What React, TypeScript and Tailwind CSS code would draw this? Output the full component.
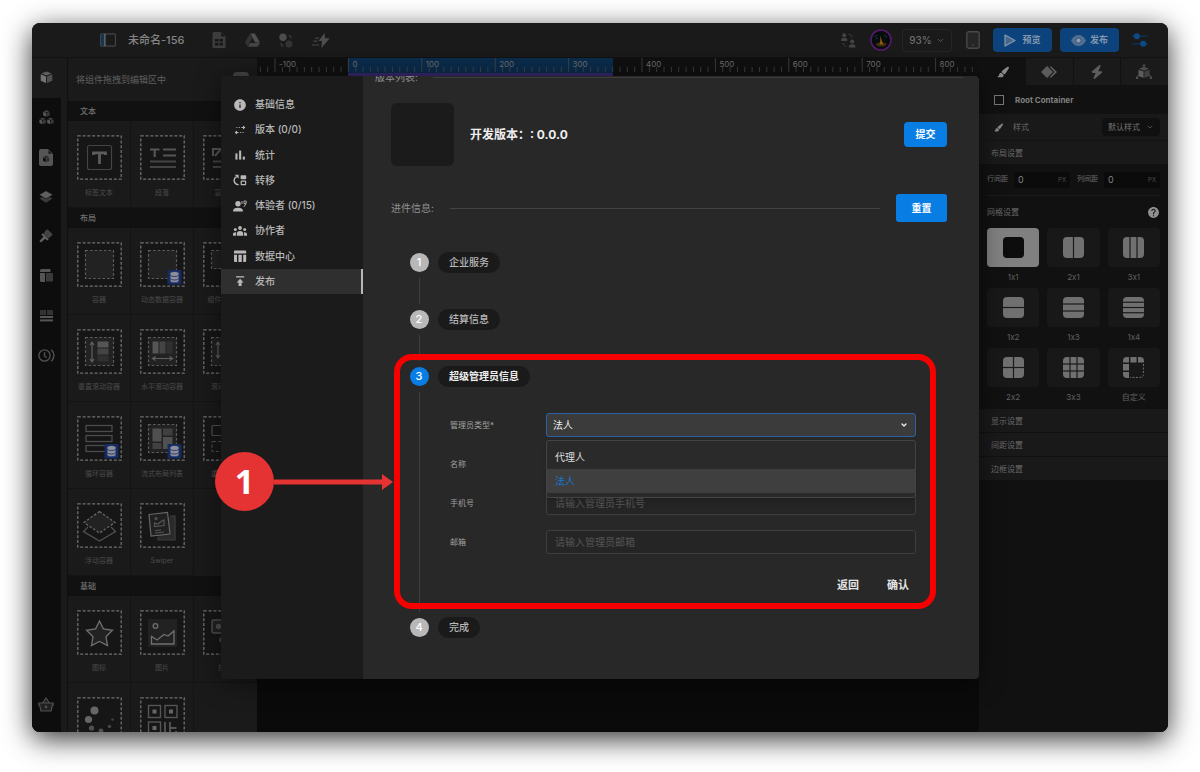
import type { ReactNode } from 'react';
import { useState } from 'react';
import { ChevronDown } from 'lucide-react';
import { MdHelp, MdInfo } from 'react-icons/md';
import { FaBolt, FaPaintbrush } from 'react-icons/fa6';

interface MenuItem {
  label: string;
  icon: ReactNode;
}

interface LibraryItem {
  label: string;
  icon: ReactNode;
  data?: boolean;
}

interface LibraryGroup {
  title: string;
  items: LibraryItem[];
}

const CubeShape = ({ x = 0, y = 0, s = 1 }: { x?: number; y?: number; s?: number }) => (
  <g transform={`translate(${x} ${y}) scale(${s})`}>
    <path d="M7 0.5 12.6 2.6 7 4.8 1.4 2.6Z" opacity="0.75" />
    <path d="M0.8 3.6 6.5 5.8V13L0.8 10.6Z" />
    <path d="M13.2 3.6 7.5 5.8V13L13.2 10.6Z" opacity="0.6" />
  </g>
);

const railIcons: ReactNode[] = [
  <svg key="cube" viewBox="0 0 14 14" className="size-[13px]" fill="#747474"><CubeShape /></svg>,
  <svg key="cubes" viewBox="0 0 15 15" className="size-[15px]" fill="#585858">
    <CubeShape x={3.8} y={0} s={0.52} />
    <CubeShape x={0} y={7.6} s={0.52} />
    <CubeShape x={7.8} y={7.6} s={0.52} />
  </svg>,
  <svg key="file" viewBox="0 0 14 17" className="h-[17px] w-3.5">
    <path d="M2 0H9L14 5V15a2 2 0 0 1-2 2H2a2 2 0 0 1-2-2V2a2 2 0 0 1 2-2Z" fill="#555" />
    <g fill="#111"><CubeShape x={3.6} y={6.6} s={0.5} /><path d="M9.5 1.5V4.7H12.7Z" /></g>
  </svg>,
  <svg key="layers" viewBox="0 0 14 14" className="size-3.5">
    <path d="M0.4 8.6 7 5.2 13.6 8.6 7 12.8Z" fill="#3a3a3a" />
    <path d="M7 0.8 14 4.8 7 8.8 0 4.8Z" fill="#606060" stroke="#0d0d0d" strokeWidth="0.6" />
  </svg>,
  <svg key="gavel" viewBox="0 0 14 14" className="size-3.5">
    <path d="M6.4 1.8 8.4 0.2 13.8 5.4 9.4 9.6 4.6 4.8Z" fill="#444" />
    <path d="M3.8 4.2 9.8 10.2 8.2 11.6 6.2 9.8 2 13.6 0.4 12 4.4 7.8 2.4 5.8Z" fill="#606060" />
  </svg>,
  <svg key="panels" viewBox="0 0 13 13" className="size-[13px]" fill="#555">
    <path d="M1.5 0H10.5V3H0V1.5A1.5 1.5 0 0 1 1.5 0ZM0 4H5V13H1.5A1.5 1.5 0 0 1 0 11.5Z" />
    <rect x="6" y="4" width="7" height="8.5" rx="1" fill="#3a3a3a" />
  </svg>,
  <svg key="rows" viewBox="0 0 13 12" className="h-3 w-[13px]" fill="#555">
    <rect width="6" height="5" fill="#333" /><rect x="7" width="6" height="5" fill="#333" />
    <rect y="6" width="13" height="2" /><rect y="9.4" width="13" height="2" />
  </svg>,
  <svg key="clock" viewBox="0 0 17 13" className="h-[13px] w-[17px]" fill="none" stroke="#505050" strokeWidth="1.4">
    <circle cx="6.5" cy="6.5" r="5.6" /><path d="M6.5 3.2V7L8.6 8.8" /><path d="M13.4 0.8Q18.5 6.5 13.4 12.2" />
  </svg>,
];

const dbBadge = (
  <g>
    <rect x="27.5" y="28" width="14" height="14.5" rx="1" fill="#172b63" />
    <g fill="#8c8f9a" stroke="#172b63" strokeWidth="0.8">
      <path d="M30 38.2V36.4H39V38.2Q39 40.8 34.5 40.8T30 38.2Z" />
      <path d="M30 35.4V33.2H39V35.4Q39 38 34.5 38T30 35.4Z" />
      <ellipse cx="34.5" cy="32" rx="4.7" ry="2.5" />
    </g>
  </g>
);

const innerDashes = <rect x="8.5" y="8.5" width="28" height="28" fill="#222" stroke="#5c5c5c" strokeWidth="1.2" strokeDasharray="2.6 2" />;

const library: LibraryGroup[] = [
  {
    title: '文本',
    items: [
      {
        label: '标签文本',
        icon: (
          <g>
            <rect x="10.5" y="10.5" width="24" height="24" rx="2" fill="none" stroke="#444" strokeWidth="1.2" />
            <path d="M16.5 20V17.8H28.5V20M22.5 17.5V29" fill="none" stroke="#5c5c5c" strokeWidth="2.8" />
          </g>
        ),
      },
      {
        label: '段落',
        icon: (
          <g fill="none" stroke="#555" strokeWidth="2.2">
            <path d="M10 14.5H19.5M14.7 14.5V22M23 14.5H36M23 20.5H36" /><path d="M10 26.5H36M10 32H36" stroke="#444" />
          </g>
        ),
      },
      {
        label: '富文本',
        icon: <g fill="none" stroke="#555" strokeWidth="2"><path d="M10 21V14H18L12 21M23 14H36M23 20H36" /><path d="M10 26.5H36M10 32H36" stroke="#444" /></g>,
      },
    ],
  },
  {
    title: '布局',
    items: [
      { label: '容器', icon: innerDashes },
      { label: '动态数据容器', icon: innerDashes, data: true },
      { label: '组件化容器', icon: <rect x="8.5" y="8.5" width="28" height="18" fill="#222" stroke="#5c5c5c" strokeWidth="1.2" strokeDasharray="2.6 2" /> },
      {
        label: '垂直滚动容器',
        icon: (
          <g>
            {innerDashes}
            <path d="M15 14V32M13 16 15 13 17 16M13 30 15 33 17 30" fill="none" stroke="#606060" strokeWidth="1.2" />
            <rect x="20.5" y="12.5" width="11" height="6" fill="#555" /><rect x="20.5" y="19.5" width="11" height="6" fill="#444" /><rect x="20.5" y="26.5" width="11" height="6" fill="#303030" />
          </g>
        ),
      },
      {
        label: '水平滚动容器',
        icon: (
          <g>
            {innerDashes}
            <path d="M13 29.5H32M15.5 27.5 12.5 29.5 15.5 31.5M29.5 27.5 32.5 29.5 29.5 31.5" fill="none" stroke="#606060" strokeWidth="1.2" />
            <rect x="12.5" y="12.5" width="6" height="12" fill="#555" /><rect x="19.5" y="12.5" width="6" height="12" fill="#444" /><rect x="26.5" y="12.5" width="6" height="12" fill="#303030" />
          </g>
        ),
      },
      {
        label: '滚动容器',
        icon: <g>{innerDashes}<path d="M15 14V28M13 16 15 13 17 16M13 26 15 29 17 26" fill="none" stroke="#606060" strokeWidth="1.2" /></g>,
      },
      {
        label: '循环容器',
        data: true,
        icon: <g fill="none" stroke="#4c4c4c" strokeWidth="1.3"><rect x="9" y="9.5" width="26" height="6" /><rect x="9" y="19.5" width="26" height="6" /><rect x="9" y="29.5" width="26" height="6" /></g>,
      },
      {
        label: '流式布局列表',
        data: true,
        icon: (
          <g>
            {innerDashes}
            <rect x="12.5" y="12.5" width="9" height="13" fill="#505050" /><rect x="23" y="12.5" width="9.5" height="7" fill="#404040" />
            <rect x="12.5" y="27" width="9" height="6" fill="#404040" /><rect x="23" y="21" width="9.5" height="12" fill="#505050" />
          </g>
        ),
      },
      {
        label: '重叠容器',
        icon: <g fill="none" stroke="#505050" strokeWidth="1.2"><rect x="9" y="9.5" width="12" height="10" rx="1" /><rect x="9" y="25.5" width="12" height="10" rx="1" strokeDasharray="3 2" /></g>,
      },
      {
        label: '浮动容器',
        icon: (
          <g strokeWidth="1.3">
            <path d="M11 24 6.5 28.5 22.5 38 38.5 28.5 34 24" fill="none" stroke="#505050" />
            <path d="M22.5 8.5 38 19.5 22.5 30 7 19.5Z" fill="#222" stroke="#666" strokeDasharray="2.6 1.7" />
          </g>
        ),
      },
      {
        label: 'Swiper',
        icon: (
          <g fill="none" stroke="#555" strokeWidth="1.2">
            <path d="M30 13H35V37H18V34" fill="#2a2a2a" stroke="#3d3d3d" />
            <path d="M9 11.5 27.5 9.5 30 31 11 33Z" fill="#202020" stroke="#666" />
            <circle cx="16" cy="15.5" r="1" /><path d="M14.5 23.5V20L18 21 21 18.5 24 17V22.5ZM15 27.5 21 27M15 30 24 29" />
          </g>
        ),
      },
    ],
  },
  {
    title: '基础',
    items: [
      { label: '图标', icon: <path d="M22.5 11 26.4 18.8 35.5 20.3 29 26.7 30.5 35.5 22.5 31.5 14.5 35.5 16 26.7 9.5 20.3 18.6 18.8Z" fill="#222" stroke="#707070" strokeWidth="1.3" /> },
      {
        label: '图片',
        icon: (
          <g fill="none" stroke="#707070" strokeWidth="1.3">
            <rect x="8" y="9" width="29" height="28" fill="#222" stroke="none" /><circle cx="15.5" cy="16" r="2.3" />
            <path d="M11.5 34V26.5L17 30 24 24.5 28 26 34 21V34Z" />
          </g>
        ),
      },
      { label: '按钮', icon: <g fill="none" stroke="#505050" strokeWidth="1.4"><rect x="9" y="10" width="27" height="13" rx="2" fill="#222" /><circle cx="15.5" cy="16.5" r="2" fill="#505050" /><path d="M21 27A3 3 0 0 0 18 32" /></g> },
      {
        label: '加载',
        icon: (
          <g fill="#666">
            <circle cx="17.5" cy="13.5" r="4" /><circle cx="11.5" cy="22.5" r="3.6" /><circle cx="14.5" cy="31" r="2.6" fill="#505050" />
            <circle cx="24" cy="34" r="2.4" fill="#505050" /><circle cx="32.5" cy="29.5" r="1.8" fill="#444" /><circle cx="35.5" cy="22.5" r="1.2" fill="#444" />
          </g>
        ),
      },
      {
        label: '二维码',
        icon: (
          <g fill="none" stroke="#555" strokeWidth="1.4">
            <rect x="8.5" y="8.5" width="12" height="12" /><rect x="25" y="8.5" width="12" height="12" /><rect x="8.5" y="25" width="12" height="12" />
            <g fill="#666" stroke="none"><rect x="12.5" y="12.5" width="4" height="4" /><rect x="29" y="12.5" width="4" height="4" /><rect x="12.5" y="29" width="4" height="4" /></g>
            <path d="M25 25V37M30 25V31H36.5M30 31V36M36 34V38" strokeWidth="1.8" />
          </g>
        ),
      },
    ],
  },
];

const menu: MenuItem[] = [
  { label: '基础信息', icon: <MdInfo size={14} /> },
  {
    label: '版本 (0/0)',
    icon: (
      <svg viewBox="0 0 14 14" className="size-3.5" fill="currentColor">
        <path d="M8.4 4H10V2.6L12.4 4.5 10 6.4V5H8.4ZM5.6 9H4V7.6L1.6 9.5 4 11.4V10H5.6Z" />
        <path d="M3.4 4H4.4V5H3.4ZM5.8 4H6.8V5H5.8ZM7.2 9H8.2V10H7.2ZM9.6 9H10.6V10H9.6Z" />
      </svg>
    ),
  },
  {
    label: '统计',
    icon: (
      <svg viewBox="0 0 14 14" className="size-3.5" fill="currentColor">
        <rect x="2.4" y="5.4" width="2.1" height="6.2" /><rect x="6.1" y="2.6" width="2.1" height="9" /><rect x="9.8" y="8.6" width="2.1" height="3" />
      </svg>
    ),
  },
  {
    label: '转移',
    icon: (
      <svg viewBox="0 0 14 14" className="size-3.5" fill="currentColor">
        <path d="M5.6 11.6H5A4.2 4.2 0 0 1 3.6 3.6" fill="none" stroke="currentColor" strokeWidth="1.4" />
        <path d="M1.6 1.8H5.6V5.8Z" /><rect x="7.6" y="2.2" width="5.6" height="4" rx="0.8" />
        <rect x="8.2" y="8.2" width="4.4" height="3.4" rx="0.4" fill="none" stroke="currentColor" strokeWidth="1.2" />
      </svg>
    ),
  },
  {
    label: '体验者 (0/15)',
    icon: (
      <svg viewBox="0 0 14 14" className="size-3.5" fill="currentColor">
        <circle cx="5" cy="4.8" r="2.7" /><path d="M0.2 12.6V11.6Q0.2 8.8 5 8.8T9.8 11.6V12.6Z" />
        <path d="M9 2V5M11 2H13.2V4.6H11ZM12.8 5 10.8 8" fill="none" stroke="currentColor" strokeWidth="0.9" />
      </svg>
    ),
  },
  {
    label: '协作者',
    icon: (
      <svg viewBox="0 0 14 14" className="size-3.5" fill="currentColor">
        <circle cx="7" cy="4" r="1.9" /><circle cx="2.3" cy="5.6" r="1.5" /><circle cx="11.7" cy="5.6" r="1.5" />
        <path d="M3.8 11.8V9.6Q3.8 7 7 7T10.2 9.6V11.8ZM0 11.8V9.8Q0 8 3 8.2L2.9 11.8ZM14 11.8V9.8Q14 8 11 8.2L11.1 11.8Z" />
      </svg>
    ),
  },
  {
    label: '数据中心',
    icon: (
      <svg viewBox="0 0 14 14" className="size-3.5" fill="currentColor">
        <path d="M2 1.4H12.2A1 1 0 0 1 13.2 2.4V4.6H1V2.4A1 1 0 0 1 2 1.4ZM1 5.8H4V13H2A1 1 0 0 1 1 12ZM5.4 5.8H8.8V13H5.4ZM10.2 5.8H13.2V12A1 1 0 0 1 12.2 13H10.2Z" />
      </svg>
    ),
  },
  {
    label: '发布',
    icon: (
      <svg viewBox="0 0 14 14" className="size-3.5" fill="currentColor">
        <rect x="3" y="2.2" width="8.2" height="1.3" />
        <path d="M7.1 4.8 10.6 8.4H8.6V12H5.6V8.4H3.6Z" />
      </svg>
    ),
  },
];

const grids = [
  { label: '1x1', cols: 1, rows: 1 },
  { label: '2x1', cols: 2, rows: 1 },
  { label: '3x1', cols: 3, rows: 1 },
  { label: '1x2', cols: 1, rows: 2 },
  { label: '1x3', cols: 1, rows: 3 },
  { label: '1x4', cols: 1, rows: 4 },
  { label: '2x2', cols: 2, rows: 2 },
  { label: '3x3', cols: 3, rows: 3 },
  { label: '自定义', cols: 0, rows: 0 },
];

function TopBar() {
  return (
    <header className="flex h-[35px] shrink-0 items-center border-b border-[#111] bg-[#1a1a1a] pr-5 pl-[68px]">
      <button aria-label="侧边栏">
        <svg viewBox="0 0 16 14" className="h-3.5 w-4" fill="none">
          <rect x="0.6" y="0.8" width="14.8" height="12.4" rx="1" stroke="#444" strokeWidth="1.2" />
          <rect x="1.2" y="1.4" width="3" height="11.2" fill="#15375f" /><path d="M4.9 1V13" stroke="#777" strokeWidth="1.2" />
        </svg>
      </button>
      <h1 className="ml-3 text-[11px] font-medium text-[#858585]">未命名-156</h1>
      <div className="ml-7 flex items-center gap-[19px]">
        <button aria-label="表格">
          <svg viewBox="0 0 13 16" className="h-4 w-3.5">
            <path d="M1 0H8.5L13 4.5V15a1 1 0 0 1-1 1H1a1 1 0 0 1-1-1V1a1 1 0 0 1 1-1Z" fill="#3c3c3c" />
            <path d="M2.5 7H6V9.6H2.5ZM7 7H10.5V9.6H7ZM2.5 10.8H6V13.4H2.5ZM7 10.8H10.5V13.4H7ZM8.6 0.4V4.4H12.6Z" fill="#161616" />
          </svg>
        </button>
        <button aria-label="云盘">
          <svg viewBox="0 0 15 14" className="h-3.5 w-[15px]">
            <path d="M5 0.5H9.8L15 9.4H10.2Z" fill="#505050" /><path d="M4.6 1.2 7 5.4 2.4 13.4 0 9.2Z" fill="#333" /><path d="M5 9.9H15L12.6 13.8H2.8Z" fill="#444" />
          </svg>
        </button>
        <button aria-label="切换">
          <svg viewBox="0 0 14 14" className="h-[15px] w-3.5">
            <circle cx="4" cy="3.8" r="3.7" fill="#4c4c4c" /><circle cx="10" cy="10.4" r="3.5" fill="#333" />
            <path d="M9.5 2Q12 2 12 5M4.6 12.5Q2 12.5 2 9.5" fill="none" stroke="#3c3c3c" strokeWidth="1.2" />
          </svg>
        </button>
        <button aria-label="快捷操作">
          <svg viewBox="0 0 18 15" className="h-[15px] w-[18px]">
            <path d="M12.6 0 6.5 8H10L9.4 15 17.8 5.2H13Z" fill="#4c4c4c" /><path d="M3 5.2H7M1.4 8.2H5.4M0 12H7.4" stroke="#444" strokeWidth="1.2" />
          </svg>
        </button>
      </div>
      <div className="ml-auto flex items-center">
        <svg viewBox="0 0 15 15" className="size-[15px]" fill="#444">
          <circle cx="3.2" cy="2.2" r="2" /><path d="M0 8Q0 4.8 3.2 4.8T6.4 8Z" /><circle cx="11.2" cy="8.6" r="2" /><path d="M7.8 14.6Q7.8 11.2 11.2 11.2T14.6 14.6Z" />
          <path d="M7.6 1.4Q11 1.4 11 4.8M2.4 10Q2.4 13.4 6 13.4" fill="none" stroke="#444" strokeDasharray="2 1" />
        </svg>
        <svg viewBox="0 0 22 22" className="ml-3.5 size-[22px]">
          <circle cx="11" cy="11" r="10" fill="#060b0b" stroke="#541a70" strokeWidth="1.6" />
          <path d="M4.5 8 7.5 6M14 6 17 8.5M5.5 10 8 9" fill="none" stroke="#123030" strokeWidth="1.2" />
          <path d="M5 15Q11 12.5 17 14.5L14.5 17.5H8Z" fill="#43290f" />
          <path d="M10.4 6.5 11.6 11 13.4 15.5H9.4L10.2 12Z" fill="#8a5a14" />
        </svg>
        <button className="ml-2.5 flex h-[23px] w-[50px] items-center justify-center gap-1 rounded border border-[#262626] text-[10px] font-medium text-[#6c6c6c]">
          93%
          <ChevronDown size={9} />
        </button>
        <svg viewBox="0 0 14 18" className="ml-3.5 h-[18px] w-3.5" fill="#262626" stroke="#484848" strokeWidth="1.4">
          <rect x="0.8" y="0.8" width="12.4" height="16.4" rx="2" /><path d="M6.3 14H7.7" />
        </svg>
        <button className="ml-[13px] flex h-6 w-[59px] items-center justify-center gap-1.5 rounded-sm bg-[#0c437c] text-[9px] font-bold text-[#8398af]">
          <svg viewBox="0 0 12 13" className="h-[13px] w-3" fill="#47668a" stroke="#8398af" strokeWidth="1.2"><path d="M1 1 11 6.5 1 12Z" strokeLinejoin="round" /></svg>
          预览
        </button>
        <button className="ml-2 flex h-6 w-[59px] items-center justify-center gap-1 rounded-sm bg-[#0c437c] text-[9px] font-bold text-[#8398af]">
          <svg viewBox="0 0 15 11" className="h-[11px] w-[15px]"><path d="M0 5.5Q3 0 7.5 0T15 5.5Q12 11 7.5 11T0 5.5Z" fill="#54708f" /><circle cx="7.5" cy="5.5" r="2.6" fill="#8ba0b6" stroke="#274b74" strokeWidth="0.8" /></svg>
          发布
        </button>
        <button aria-label="设置" className="ml-[13px]">
          <svg viewBox="0 0 16 14" className="h-3.5 w-4" stroke="#0c355e" strokeWidth="1.3"><path d="M0 3.2H16M0 10.8H16" /><g fill="#0d4a88" stroke="none"><circle cx="4.8" cy="3.2" r="3" /><circle cx="11.2" cy="10.8" r="3" /></g></svg>
        </button>
      </div>
    </header>
  );
}

function Rail() {
  return (
    <nav className="flex w-[29px] shrink-0 flex-col bg-[#0d0d0d]">
      <div className="grid h-[317px] grid-rows-8">
        {railIcons.map((icon, i) => (
          <button key={i} aria-label={`工具 ${i + 1}`} className={`flex items-center justify-center pr-px ${i === 0 ? 'bg-[#1a1a1a]' : ''}`}>
            {icon}
          </button>
        ))}
      </div>
      <button aria-label="商店" className="mt-auto mb-5 flex justify-center pr-px">
        <svg viewBox="0 0 16 15" className="h-[15px] w-4" fill="#202020" stroke="#505050" strokeWidth="1.2">
          <path d="M0.8 6H15.2V8H14.4L13 14H3L1.6 8H0.8ZM4.6 6 8 1 11.4 6" strokeLinejoin="round" /><circle cx="8" cy="10" r="0.8" />
        </svg>
      </button>
    </nav>
  );
}

function Library() {
  return (
    <aside className="ml-1.5 flex w-[190px] shrink-0 flex-col overflow-hidden border-l border-[#101010] bg-[#1a1a1a]">
      <div className="flex h-[43px] shrink-0 items-center justify-between px-2">
        <p className="text-[9px] text-[#606060]">将组件拖拽到编辑区中</p>
        <span className="mb-2 h-2 w-4 rounded-full bg-[#444]" />
      </div>
      {library.map((group) => (
        <section key={group.title} className="shrink-0">
          <h2 className="flex h-5 items-center bg-[#111] pl-3 text-[8px] font-medium text-[#707070]">{group.title}</h2>
          <ul className="grid grid-cols-3">
            {group.items.map((item) => (
              <li key={item.label} className="flex h-[87px] flex-col items-center border-r border-b border-[#141414] pt-3.5">
                <svg viewBox="0 0 45 45" className="size-[45px] shrink-0">
                  <rect x="0.8" y="0.8" width="43.4" height="43.4" fill="#161616" stroke="#707070" strokeWidth="1.3" strokeDasharray="3 1.8" />
                  {item.icon}
                  {item.data && dbBadge}
                </svg>
                <span className="mt-2 text-[7px] leading-2.5 whitespace-nowrap text-[#4c4c4c]">{item.label}</span>
              </li>
            ))}
          </ul>
        </section>
      ))}
    </aside>
  );
}

function Ruler() {
  const step = 73.4;
  const ticks = Array.from({ length: 98 }, (_, i) => i - 2);

  return (
    <svg className="block h-[18px] w-full bg-[#101010]" fontSize="8">
      <rect x="91" width="265" height="15" fill="#0a2b4a" />
      <rect x="91" y="15" width="265" height="3" fill="#35266b" />
      {ticks.map((i) => (
        <path key={i} d={`M${18 + (i * step) / 10} ${i % 10 === 0 ? 0 : 9}V14`} stroke="#484848" strokeWidth="0.8" />
      ))}
      {ticks.filter((i) => i % 10 === 0).map((i) => (
        <text key={i} x={22 + (i * step) / 10} y="9" fill="#6c6c6c">{i * 10 - 100}</text>
      ))}
    </svg>
  );
}

function GridIcon({ cols, rows, dark }: { cols: number; rows: number; dark?: boolean }) {
  if (cols === 0) {
    return (
      <svg viewBox="0 0 21 21" className="size-[21px]" fill="#707070">
        <path d="M6 0V5.6H0V4Q0 0 4 0ZM7.4 0H13.6V5.6H7.4ZM15 0H17Q21 0 21 4V5.6H15ZM0 7H6V13.6H0ZM0 15H6V21H4Q0 21 0 17Z" />
        <path d="M20.4 7V17Q20.4 20.4 17 20.4H7" fill="none" stroke="#707070" strokeDasharray="2 1.5" />
      </svg>
    );
  }
  return (
    <svg viewBox="0 0 21 21" className="size-[21px]">
      <rect width="21" height="21" rx="4" fill={dark ? '#0d0d0d' : '#707070'} />
      <g stroke="#1a1a1a" strokeWidth="1.2">
        {Array.from({ length: cols - 1 }, (_, i) => <path key={i} d={`M${((i + 1) * 21) / cols} 0V21`} />)}
        {Array.from({ length: rows - 1 }, (_, i) => <path key={i} d={`M0 ${((i + 1) * 21) / rows}H21`} />)}
      </g>
    </svg>
  );
}

function Inspector() {
  return (
    <aside className="flex w-[189px] shrink-0 flex-col bg-[#111] text-[8px] text-[#6a6a6a] [font-feature-settings:'calt'_0]">
      <div className="grid h-[27px] grid-cols-4 text-[#5c5c5c]">
        <button aria-label="样式" className="flex items-center justify-center text-[#888]"><FaPaintbrush size={12} /></button>
        <button aria-label="属性" className="flex items-center justify-center border-r border-[#111] bg-[#1a1a1a]">
          <svg viewBox="0 0 16 12" className="h-3 w-4" fill="currentColor"><path d="M6 0 12 6 6 12 0 6Z" /><path d="M8.4 0.6H10.4L16 6 10.4 11.4H8.4L13.4 6Z" /></svg>
        </button>
        <button aria-label="事件" className="flex items-center justify-center border-r border-[#111] bg-[#1a1a1a]"><FaBolt size={14} /></button>
        <button aria-label="数据" className="flex items-center justify-center bg-[#1a1a1a]">
          <svg viewBox="0 0 16 16" className="size-4" fill="currentColor">
            <CubeShape x={1.7} y={2.4} s={0.9} />
            <path d="M8 4V0.6M6.6 2 8 0.6 9.4 2M2.6 11 0.6 14.4M0.4 12.6 0.6 14.4 2.4 14.4M13.4 11 15.4 14.4M15.6 12.6 15.4 14.4 13.6 14.4" fill="none" stroke="currentColor" strokeWidth="0.9" />
          </svg>
        </button>
      </div>
      <div className="flex h-[29px] items-center gap-[11px] pl-[15px] font-bold text-[#808080]">
        <span className="size-2.5 border border-[#777]" />
        Root Container
      </div>
      <div className="flex h-[27px] items-center border-b border-[#141414] bg-[#191919] pr-2 pl-[15px]">
        <FaPaintbrush size={9} className="text-[#888]" />
        <label htmlFor="style" className="ml-2.5">样式</label>
        <div className="relative ml-auto">
          <select id="style" className="h-[18px] w-[58px] appearance-none rounded-sm bg-[#101010] pl-1.5 text-[8px] text-[#777]">
            <option>默认样式</option>
          </select>
          <ChevronDown size={8} className="pointer-events-none absolute top-[5px] right-1.5" />
        </div>
      </div>
      <h2 className="flex h-[23px] items-center bg-[#191919] pl-3">布局设置</h2>
      <div className="mx-2 flex h-8 items-center justify-between border-b border-[#1c1c1c] text-[7px]">
        {['行间距', '列间距'].map((label) => (
          <label key={label} className="flex items-center gap-1.5 whitespace-nowrap">
            {label}
            <span className="flex h-4 w-14 items-center rounded-sm bg-[#0b0b0b] px-1">
              <input defaultValue="0" className="w-full min-w-0 bg-transparent text-[9px] text-[#808080] outline-none" />
              <span className="text-[6px] text-[#4c4c4c]">PX</span>
            </span>
          </label>
        ))}
      </div>
      <div className="mx-2 flex h-8 items-center justify-between">
        <h2>网格设置</h2>
        <MdHelp size={13} className="text-[#909090]" />
      </div>
      <div className="mx-2 grid grid-cols-3 gap-x-2">
        {grids.map((grid, i) => (
          <button key={grid.label} className="flex h-[60px] flex-col items-center">
            <span className={`flex h-[39px] w-full items-center justify-center rounded-sm ${i === 0 ? 'bg-[#808080]' : 'bg-[#181818]'}`}>
              <GridIcon cols={grid.cols} rows={grid.rows} dark={i === 0} />
            </span>
            <span className="mt-1 leading-3 text-[#606060]">{grid.label}</span>
          </button>
        ))}
      </div>
      <div className="mt-px">
        {['显示设置', '间距设置', '边框设置'].map((title) => (
          <h2 key={title} className="flex h-6 items-center border-b border-[#111] bg-[#191919] pl-3">{title}</h2>
        ))}
      </div>
    </aside>
  );
}

function AdminForm() {
  const [type, setType] = useState('法人');

  return (
    <form className="mt-[26px] mr-[31px] pl-3 text-[8px] text-[#a0a0a0]">
      <div className="flex flex-col gap-[15px]">
        <div className="flex items-center">
          <label htmlFor="type" className="w-24 shrink-0">管理员类型*</label>
          <div className="relative min-w-0 flex-1">
            <select
              id="type"
              value={type}
              onChange={(e) => setType(e.target.value)}
              className="block h-6 w-full appearance-none rounded-[3px] border border-[#2c62a5] bg-[#3b3b3b] pl-1.5 text-[10px] text-[#eee]"
            >
              <option>代理人</option>
              <option>法人</option>
            </select>
            <ChevronDown size={8} strokeWidth={4} className="pointer-events-none absolute top-2 right-2 text-[#eee]" />
            {/* Open option list */}
            <ul className="absolute inset-x-0 top-[27px] z-10 rounded-[3px] border border-[#444] bg-[#2a2a2a] py-1 text-[10px] text-[#ddd] shadow-md">
              {['代理人', '法人'].map((option) => (
                <li
                  key={option}
                  onClick={() => setType(option)}
                  className={`flex h-6 items-center pl-2 ${option === type ? 'bg-[#3f3f3f] text-[#1677d2]' : ''}`}
                >
                  {option}
                </li>
              ))}
            </ul>
          </div>
        </div>
        {[
          { id: 'name', label: '名称', placeholder: '' },
          { id: 'phone', label: '手机号', placeholder: '请输入管理员手机号' },
          { id: 'mail', label: '邮箱', placeholder: '请输入管理员邮箱' },
        ].map((field) => (
          <div key={field.id} className="flex items-center">
            <label htmlFor={field.id} className="w-24 shrink-0">{field.label}</label>
            <input
              id={field.id}
              placeholder={field.placeholder}
              className="h-6 min-w-0 flex-1 rounded-[3px] border border-[#3e3e3e] bg-[#252525] pl-2 text-[10px] placeholder:text-[#555]"
            />
          </div>
        ))}
      </div>
      <div className="mt-[23px] mr-[7px] flex justify-end gap-7 text-[11px] leading-4 font-bold text-[#e4e4e4]">
        <button type="button">返回</button>
        <button type="button">确认</button>
      </div>
    </form>
  );
}

function PublishDialog() {
  const steps = ['企业服务', '结算信息', '超级管理员信息', '完成'];

  return (
    <div role="dialog" aria-label="发布" className="absolute inset-x-[189px] inset-y-[53px] flex overflow-hidden rounded-sm bg-[#282828] shadow-[0_4px_24px_rgba(0,0,0,0.5)]">
      <nav className="w-[142px] shrink-0 bg-[#1b1b1b] pt-4">
        <div className="grid h-[202px] grid-rows-8">
          {menu.map((item) => (
            <button
              key={item.label}
              className={`flex items-center gap-2 pl-3 text-[10px] font-medium text-[#b8b8b8] ${item.label === '发布' ? 'border-r-2 border-[#b8b8b8] bg-[#2f2f2f]' : ''}`}
            >
              {item.icon}
              {item.label}
            </button>
          ))}
        </div>
      </nav>
      <div className="min-w-0 flex-1 overflow-hidden pr-4 pl-3">
        <div className="-mt-[7px] flex h-4 items-center gap-[15px] text-[10px] text-[#909090]">
          版本列表:
          <span className="h-px flex-1 bg-[#3c3c3c]" />
        </div>
        <div className="px-4">
          <div className="mt-[18px] flex h-[63px] items-center">
            <span className="size-[63px] rounded-md bg-[#1b1b1b]" />
            <p className="ml-4 text-[12px] font-bold text-[#eee]">开发版本：: 0.0.0</p>
            <button className="ml-auto h-[25px] w-[43px] rounded bg-[#087ee4] text-[10px] font-bold text-white">提交</button>
          </div>
          <div className="mt-7 flex h-7 items-center text-[10px] text-[#909090]">
            进件信息:
            <span className="mx-4 h-px flex-1 bg-[#444]" />
            <button className="h-7 w-[51px] rounded-[3px] bg-[#087ee4] text-[10px] font-bold text-white">重置</button>
          </div>
          <ol className="mt-[30px] pl-[18px]">
            {steps.map((step, i) => (
              <li key={step} className="flex gap-[9px]">
                <div className="flex w-5 shrink-0 flex-col items-center">
                  <span className={`my-px flex size-[19px] items-center justify-center rounded-full text-[11px] font-medium text-white ${i === 2 ? 'bg-[#087ee4]' : 'bg-[#b8b8b8]'}`}>
                    {i + 1}
                  </span>
                  {i < 3 && <span className="my-[5px] w-px flex-1 bg-[#404040]" />}
                </div>
                <div className={`min-w-0 flex-1 ${i === 2 ? 'pb-6' : i === 3 ? '' : 'pb-9'}`}>
                  <h3 className={`flex h-[21px] w-fit items-center rounded-full bg-[#1a1a1a] px-[11px] text-[10px] ${i === 2 ? 'font-bold text-[#eee]' : 'font-medium text-[#b8b8b8]'}`}>
                    {step}
                  </h3>
                  {i === 2 && <AdminForm />}
                </div>
              </li>
            ))}
          </ol>
        </div>
      </div>
    </div>
  );
}

// Numbered callout pointing at the administrator step
function Callout() {
  return (
    <div className="pointer-events-none absolute top-[331px] right-[232px] left-[183px] flex h-[255px] items-center">
      <span className="flex size-[59px] shrink-0 items-center justify-center rounded-full bg-[#e53333] font-['Open_Sans',sans-serif] text-[34px] font-bold text-white">1</span>
      <svg viewBox="0 0 120 16" className="h-4 w-[120px] shrink-0" fill="#e53333">
        <path d="M0 5.5H108V0L119 8 108 16V10.5H0Z" />
      </svg>
      <div className="h-full flex-1 rounded-[18px] border-6 border-[#f70000]" />
    </div>
  );
}

export default function App() {
  return (
    <main lang="zh-CN" className="flex h-screen bg-white px-8 pt-[23px] pb-10 font-['Inter','Noto_Sans_CJK_SC',sans-serif]">
      <div className="relative flex min-w-0 flex-1 flex-col overflow-hidden rounded-lg bg-[#0b0b0b] shadow-[0_7px_28px_rgba(0,0,0,0.8)]">
        <TopBar />
        <div className="flex min-h-0 flex-1 bg-[#1a1a1a]">
          <Rail />
          <Library />
          <div className="min-w-0 flex-1 bg-[#0a0a0a]">
            <Ruler />
          </div>
          <Inspector />
        </div>
        <PublishDialog />
        <Callout />
      </div>
    </main>
  );
}
